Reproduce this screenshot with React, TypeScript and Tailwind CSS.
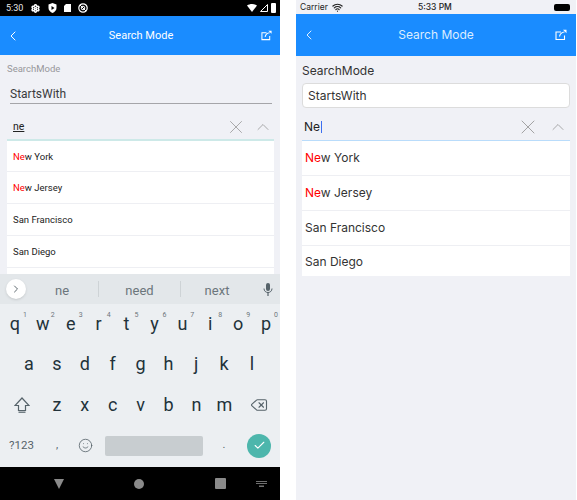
import { Check, ChevronLeft, ChevronRight, ChevronUp, Delete, Smile, X, Settings, Wifi } from "lucide-react";

const roboto = "font-['Roboto',sans-serif]";
const cities = ["New York", "New Jersey", "San Francisco", "San Diego"];

const rowOne = [
  ["q", "1"],
  ["w", "2"],
  ["e", "3"],
  ["r", "4"],
  ["t", "5"],
  ["y", "6"],
  ["u", "7"],
  ["i", "8"],
  ["o", "9"],
  ["p", "0"],
];
const rowTwo = ["a", "s", "d", "f", "g", "h", "j", "k", "l"];
const rowThree = ["z", "x", "c", "v", "b", "n", "m"];

function ExternalIcon({ className }: { className?: string }) {
  return (
    <svg viewBox="0 0 12 12" className={className} fill="none" stroke="white" strokeWidth="1.1">
      <path d="M9.5 6.5V10.5H1V3H6" />
      <path d="M4.5 7.5C5 5 6.5 3.2 9.5 3" strokeWidth="1.2" />
      <path d="M8 0.7H11.5V4.2Z" fill="white" stroke="none" />
    </svg>
  );
}

function Highlighted({ name, match }: { name: string; match: boolean }) {
  if (!match) return <span>{name}</span>;
  return (
    <span>
      <span className="text-[#ff0000]">{name.slice(0, 2)}</span>
      {name.slice(2)}
    </span>
  );
}

function AndroidStatusBar() {
  return (
    <div className="flex h-4 items-center justify-between bg-black pr-[4px] pl-[6px] text-white">
      <div className="flex items-center">
        <span className={`${roboto} text-[9px] leading-none text-[#e8e8e8]`}>5:30</span>
        <Settings size={9} strokeWidth={4} className="ml-[8px]" />
        <svg viewBox="0 0 9 10" className="ml-[8px] h-[10px] w-[9px]">
          <path d="M4.5 0L8.5 1.5V5C8.5 7.5 6.5 9 4.5 10C2.5 9 0.5 7.5 0.5 5V1.5Z" fill="white" />
          <path d="M3.5 3V7L6.5 5Z" fill="black" />
        </svg>
        <svg viewBox="0 0 7 8" className="ml-[7px] h-[8px] w-[7px]">
          <path d="M2 0H7V8H0V2Z" fill="white" />
        </svg>
        <svg viewBox="0 0 10 10" className="ml-[7px] h-[10px] w-[10px]" fill="none" stroke="white">
          <circle cx="5" cy="5" r="4.2" strokeWidth="1.2" />
          <circle cx="5" cy="5" r="1.8" strokeWidth="1" />
          <path d="M2 2L8 8" strokeWidth="1" />
        </svg>
      </div>
      <div className="flex items-center gap-[3px]">
        <svg viewBox="0 0 10 8" className="h-2 w-[10px]">
          <path d="M0 1.5C3 -0.5 7 -0.5 10 1.5L5 8Z" fill="white" />
        </svg>
        <svg viewBox="0 0 8 8" className="h-2 w-2">
          <path d="M7.5 0.5V7.5H0.5Z" fill="none" stroke="white" />
        </svg>
        <div className="h-[10px] w-[5px] rounded-[1px] bg-white" />
      </div>
    </div>
  );
}

function AndroidPhone() {
  return (
    <div className={`flex h-[500px] w-[280px] flex-col bg-[#f0f1f6] ${roboto}`}>
      <AndroidStatusBar />
      <div className="flex h-[39px] items-center justify-between bg-[#1a8cff] pr-[8px] pl-[5px] text-white">
        <ChevronLeft size={16} strokeWidth={1.5} />
        <span className="pt-px text-[11px]">Search Mode</span>
        <ExternalIcon className="h-[11px] w-[11px]" />
      </div>
      <div className="px-[7px] pt-[7px] text-[9.5px] leading-[13px] text-[#97979b]">SearchMode</div>
      <div className="mr-[8px] ml-[10px] mt-[7px] h-[22px] border-b border-[#a5a5a9] text-[12px] leading-[24px] text-[#3a3a3c]">
        StartsWith
      </div>
      <div className="mr-[6px] ml-[7px] mt-[11px] flex h-[26px] items-center border-b-2 border-[#cde9e8] pr-px pl-[6px]">
        <span className="flex-1 text-[10.5px] text-[#222] underline">ne</span>
        <X size={22} strokeWidth={0.8} className="-translate-x-px text-[#8f8f8f]" />
        <ChevronUp size={20} strokeWidth={0.9} className="ml-[5px] text-[#8f8f8f]" />
      </div>
      <div className="mr-[6px] ml-[7px] h-[133px] overflow-hidden bg-white text-[9.5px] text-[#222]">
        {cities.map((name) => (
          <div key={name} className="flex h-[32px] items-center border-b border-[#eeeff3] pt-[2px] pl-[6px] first:h-[31px]">
            <Highlighted name={name} match={name.startsWith("New")} />
          </div>
        ))}
      </div>
      <div className="flex h-[30px] items-center bg-[#e3e7ea] text-[13px] text-[#6c767c]">
        <div className="ml-[6px] flex h-5 w-5 items-center justify-center rounded-full bg-white shadow-sm">
          <ChevronRight size={12} strokeWidth={2} className="text-[#5f6a70]" />
        </div>
        <div className="w-[72px] pt-[3px] text-center">ne</div>
        <div className="h-4 w-px bg-[#ced3d6]" />
        <div className="w-[81px] pt-[3px] text-center">need</div>
        <div className="h-4 w-px bg-[#ced3d6]" />
        <div className="w-[72px] pt-[3px] text-center">next</div>
        <svg viewBox="0 0 10 13" className="ml-[10px] h-[13px] w-[10px]" fill="#56636a">
          <rect x="3" y="0" width="4" height="8" rx="2" />
          <path d="M1 5.5C1 8 2.8 9.5 5 9.5C7.2 9.5 9 8 9 5.5" fill="none" stroke="#56636a" />
          <rect x="4.4" y="9" width="1.2" height="4" />
        </svg>
      </div>
      <div className="h-[163px] bg-[#eceff2] text-[#22323a]">
        <div className="grid h-[39px] grid-cols-10 pt-[6px] pl-px">
          {rowOne.map(([key, digit]) => (
            <div key={key} className="relative text-center text-[18px] leading-[28px]">
              {key}
              <span className="absolute top-[1px] right-[2px] text-[7px] leading-[8px] text-[#6c767c]">{digit}</span>
            </div>
          ))}
        </div>
        <div className="flex h-[41px] justify-center pl-px">
          {rowTwo.map((key) => (
            <div key={key} className="w-[27.9px] text-center text-[18px] leading-[41px]">
              {key}
            </div>
          ))}
        </div>
        <div className="flex h-[41px] items-center">
          <div className="flex w-[43px] justify-center">
            <svg viewBox="0 0 16 16" className="h-4 w-4" fill="none" stroke="#56636a" strokeWidth="1.2">
              <path d="M8 1L15 8.5H11.5V13.5H4.5V8.5H1Z" />
              <path d="M4.5 15.2H11.5" />
            </svg>
          </div>
          {rowThree.map((key) => (
            <div key={key} className="w-[27.9px] text-center text-[18px]">
              {key}
            </div>
          ))}
          <div className="flex flex-1 justify-center">
            <Delete size={18} strokeWidth={1.5} className="text-[#56636a]" />
          </div>
        </div>
        <div className="flex h-[41px] items-center text-[#56636a]">
          <div className="w-[43px] text-center text-[11.5px]">?123</div>
          <div className="w-[28px] text-center text-[11px]">,</div>
          <div className="flex w-[28px] justify-center">
            <Smile size={15} strokeWidth={1.3} />
          </div>
          <div className="ml-[6px] h-5 w-[98px] rounded-[2px] bg-[#c8cdd0]" />
          <div className="w-[42px] text-center text-[11px]">.</div>
          <div className="ml-[2px] flex h-6 w-6 items-center justify-center rounded-full bg-[#4db6ac]">
            <Check size={13} strokeWidth={2} className="text-white" />
          </div>
        </div>
      </div>
      <div className="flex flex-1 items-center bg-black pl-[54px]">
        <div className="h-0 w-0 border-x-[5.5px] border-t-[10px] border-x-transparent border-t-[#8a8a8a]" />
        <div className="ml-[70px] h-[10px] w-[10px] rounded-full bg-[#8a8a8a]" />
        <div className="ml-[71px] h-[11px] w-[11px] rounded-[1px] bg-[#8a8a8a]" />
        <svg viewBox="0 0 11 6" className="ml-[30px] h-[6px] w-[11px]" fill="#6f6f6f">
          <path d="M0 0H11V1H0ZM0 2H11V3H0ZM3 4.5H8V6H3Z" />
        </svg>
      </div>
    </div>
  );
}

function IosPhone() {
  return (
    <div className="flex h-[500px] w-[280px] flex-col bg-[#f0f1f6] font-['Inter',sans-serif]">
      <div className="flex h-[14px] items-center pl-[4px] text-[8.5px] text-[#222]">
        <span>Carrier</span>
        <Wifi size={11} strokeWidth={2.5} className="ml-[4px]" />
        <span className="ml-[75px] font-medium">5:33 PM</span>
        <div className="mr-[6px] ml-auto h-[7px] w-[16px] rounded-[2px] bg-black" />
      </div>
      <div className="flex h-[42px] items-center justify-between bg-[#1a8cff] pr-[9px] pl-[5px] text-white">
        <ChevronLeft size={16} strokeWidth={1.3} />
        <span className="text-[12px] text-[#dcedff]">Search Mode</span>
        <ExternalIcon className="h-3 w-3" />
      </div>
      <div className="px-[6px] pt-[8px] text-[12px] leading-[14px] text-[#333]">SearchMode</div>
      <div className="mx-[6px] mt-[5px] h-[25px] rounded-[4px] border border-[#dcdcdc] bg-white pl-[5px] text-[12px] leading-[23px] text-[#333]">
        StartsWith
      </div>
      <div className="mx-[6px] mt-[5px] flex h-[28px] items-center border-b border-[#b9dcfb] pr-[2px] pl-[2px]">
        <span className="flex-1 text-[12px] text-[#222]">
          Ne<span className="ml-px inline-block h-[12px] w-px translate-y-[2px] bg-[#3d6ff0]" />
        </span>
        <X size={24} strokeWidth={0.8} className="text-[#8f8f8f]" />
        <ChevronUp size={20} strokeWidth={0.9} className="ml-[8px] text-[#8f8f8f]" />
      </div>
      <div className="mx-[6px] h-[135px] overflow-hidden bg-white text-[12px] text-[#333]">
        {cities.map((name) => (
          <div key={name} className="flex h-[35px] items-center border-b border-[#eeeff3] pl-[3px] last:h-[32px] last:border-b-0">
            <Highlighted name={name} match={name.startsWith("New")} />
          </div>
        ))}
      </div>
    </div>
  );
}

export default function App() {
  return (
    <div className="flex h-[500px] w-[577px] bg-white">
      <AndroidPhone />
      <div className="w-4" />
      <IosPhone />
    </div>
  );
}
